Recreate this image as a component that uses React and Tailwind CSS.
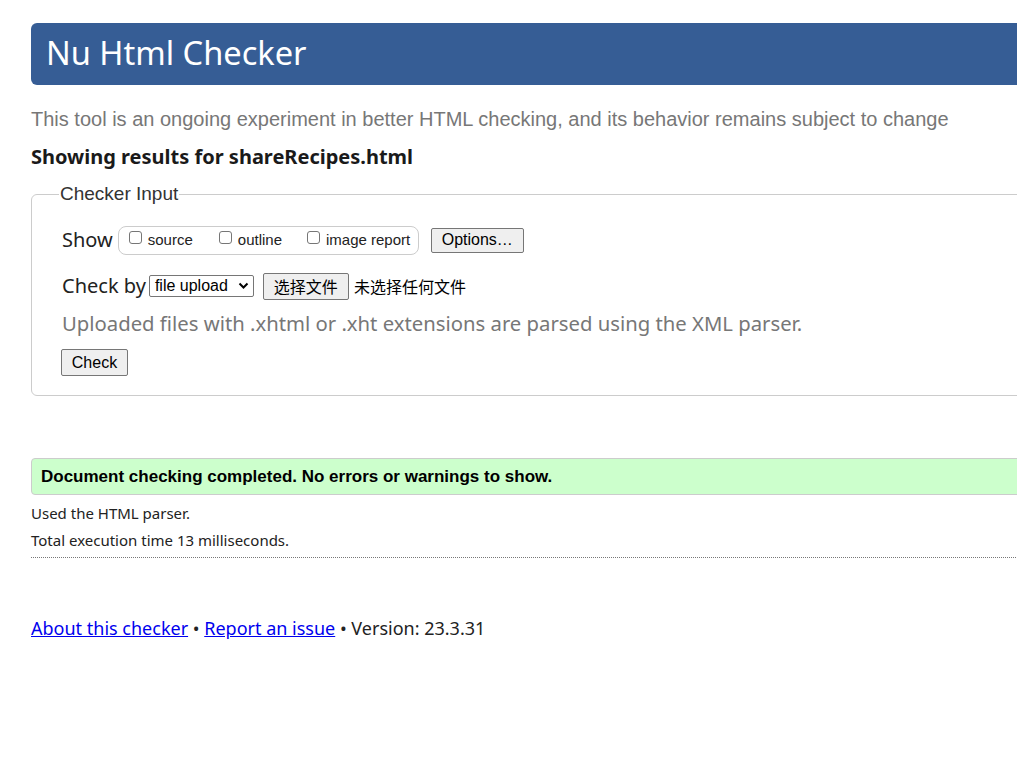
import React from "react";

function Box() {
  return (
    <span className="inline-block w-[13px] h-[13px] border border-[#767676] rounded-[3px] bg-white mr-[6px] -mt-[5px]" />
  );
}

const segoe = "font-['Noto_Sans','Open_Sans',sans-serif]";
const arial = "font-['Liberation_Sans',Arial,sans-serif]";
const cjk = "font-['Noto_Sans_CJK_SC',sans-serif]";

export default function App() {
  return (
    <div className="w-[1017px] h-[765px] overflow-hidden bg-white">
      <div className="w-[1100px] pl-[31px] pt-[23px]">
        <div className="h-[62px] bg-[#365d95] rounded-[6px] flex items-center pl-[15px] text-white text-[32.6px] font-['Noto_Sans','Open_Sans',sans-serif]">
          <span className="leading-none -mt-[2px]">Nu Html Checker</span>
        </div>

        <p className="mt-[22px] text-[20px] leading-[24px] text-[#777777] font-['Liberation_Sans',Arial,sans-serif]">
          This tool is an ongoing experiment in better HTML checking, and its behavior remains subject to change
        </p>

        <h2 className="mt-[14px] text-[20px] leading-[24px] font-bold text-[#1a1a1a] font-['Noto_Sans','Open_Sans',sans-serif]">
          Showing results for shareRecipes.html
        </h2>

        <fieldset className="mt-[14px] border border-[#cccccc] rounded-[6px] pl-[30px] pr-4 pb-[19px] pt-[20px]">
          <legend className="ml-[-3px] px-[1px] text-[19px] leading-[22px] text-[#333333] font-['Liberation_Sans',Arial,sans-serif]">
            Checker Input
          </legend>

          <div className="flex items-center h-[30px]">
            <span className="text-[20px] text-[#222] mr-[5px] font-['Noto_Sans','Open_Sans',sans-serif]">Show</span>
            <div className="flex items-center h-[29px] w-[301px] border border-[#cccccc] rounded-[8px] pl-[10px] text-[15px] text-[#222] font-['Liberation_Sans',Arial,sans-serif]">
              <label className="flex items-center">
                <Box />
                source
              </label>
              <label className="flex items-center ml-[26px]">
                <Box />
                outline
              </label>
              <label className="flex items-center ml-[25px]">
                <Box />
                image report
              </label>
            </div>
            <button className="ml-[12px] h-[25px] w-[93px] border border-[#767676] rounded-[2px] bg-[#efefef] text-[16px] text-black leading-none font-['Liberation_Sans',Arial,sans-serif]">
              Options…
            </button>
          </div>

          <div className="flex items-center h-[30px] mt-[16px]">
            <span className="text-[20px] text-[#222] mr-[3px] font-['Noto_Sans','Open_Sans',sans-serif]">Check by</span>
            <div className="flex items-center justify-between h-[22px] w-[105px] border border-[#767676] rounded-[2px] bg-white pl-[5px] pr-[4px] text-[16px] text-black font-['Liberation_Sans',Arial,sans-serif]">
              <span>file upload</span>
              <svg width="11" height="8" viewBox="0 0 11 8">
                <path d="M1.5 1.5 L5.5 5.5 L9.5 1.5" stroke="#000" strokeWidth="2" fill="none" />
              </svg>
            </div>
            <button className="ml-[9px] h-[27px] w-[86px] border border-[#767676] rounded-[2px] bg-[#efefef] text-[16px] text-black leading-none font-['Noto_Sans_CJK_SC',sans-serif]">
              选择文件
            </button>
            <span className="ml-[5px] text-[16px] text-black font-['Noto_Sans_CJK_SC',sans-serif]">
              未选择任何文件
            </span>
          </div>

          <p className="mt-[8px] text-[20.3px] leading-[28px] text-[#777777] font-['Noto_Sans','Open_Sans',sans-serif]">
            Uploaded files with .xhtml or .xht extensions are parsed using the XML parser.
          </p>

          <button className="mt-[12px] ml-[-1px] h-[27px] w-[67px] border border-[#767676] rounded-[2px] bg-[#efefef] text-[16px] text-black leading-none font-['Liberation_Sans',Arial,sans-serif]">
            Check
          </button>
        </fieldset>

        <div className="mt-[62px] h-[37px] bg-[#ccffcc] border border-[#cccccc] rounded-[4px] flex items-center pl-[9px] text-[17px] font-bold text-black font-['Liberation_Sans',Arial,sans-serif]">
          Document checking completed. No errors or warnings to show.
        </div>

        <div className="text-[15px] text-[#222] font-['Noto_Sans','Open_Sans',sans-serif]">
          <p className="mt-[8px] leading-[20px]">Used the HTML parser.</p>
          <p className="mt-[7px] leading-[20px]">Total execution time 13 milliseconds.</p>
        </div>
        <div className="mt-[7px] border-t border-dotted border-[#777777]" />

        <p className="mt-[57px] text-[18px] text-[#222] font-['Noto_Sans','Open_Sans',sans-serif]">
          <a href="#" className="text-[#0000ee] underline">About this checker</a>
          {" • "}
          <a href="#" className="text-[#0000ee] underline">Report an issue</a>
          {" • Version: 23.3.31"}
        </p>
      </div>
    </div>
  );
}
